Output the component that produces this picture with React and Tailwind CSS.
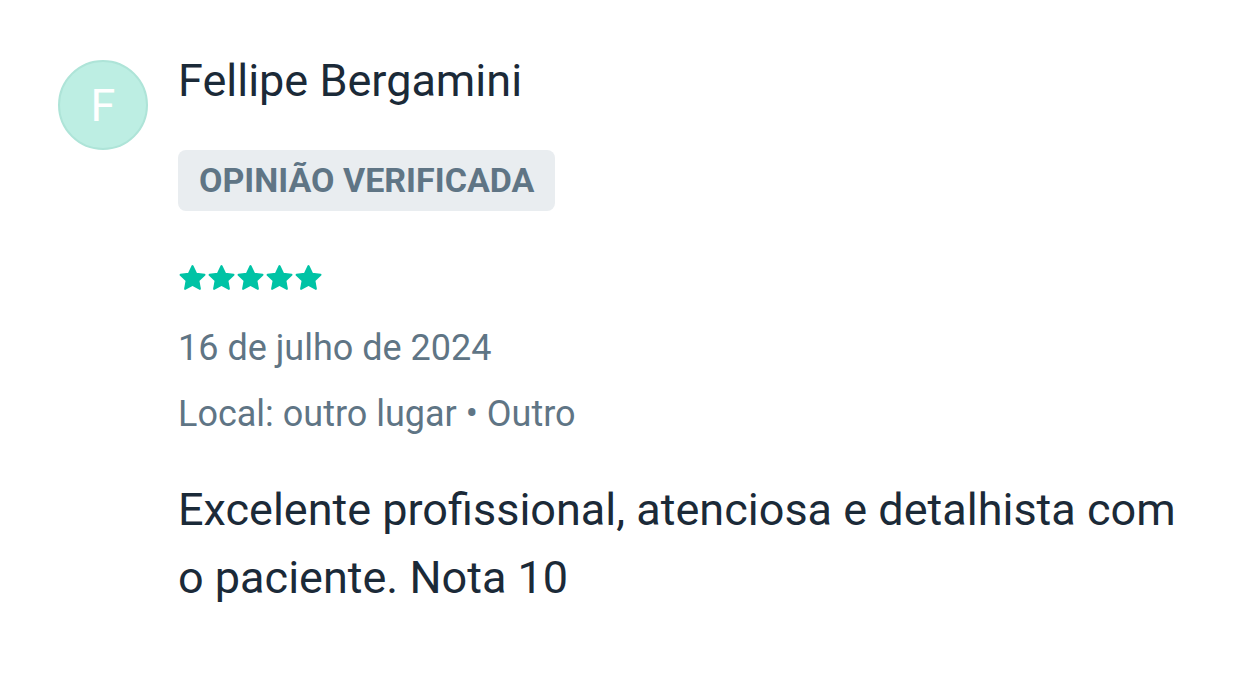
import React from "react";

function Star() {
  return (
    <svg width="29" height="28" viewBox="0 0 24 23" className="block">
      <path
        d="M12 1.6l3.05 6.3 6.9.95-5.02 4.82 1.22 6.86L12 17.28l-6.15 3.25 1.22-6.86L2.05 8.85l6.9-.95z"
        fill="#00c3a5"
        stroke="#00c3a5"
        strokeWidth="1.6"
        strokeLinejoin="round"
      />
    </svg>
  );
}

export default function App() {
  return (
    <div className="w-[1234px] h-[697px] bg-white" style={{ fontFamily: "Roboto, 'Liberation Sans', sans-serif" }}>
      <div className="flex pl-[58px] pt-[60px]">
        <div className="w-[90px] h-[90px] rounded-full bg-[#bdeee3] border-2 border-[#aee4d8] flex items-center justify-center text-white text-[45px] leading-none shrink-0">
          F
        </div>
        <div className="ml-[30px] flex flex-col">
          <div className="text-[45px] leading-[52px] text-[#1b2a38] mt-[-5px]">Fellipe Bergamini</div>
          <div className="mt-[43px] self-start bg-[#e9edf0] rounded-[8px] h-[61px] px-[21px] flex items-center text-[34px] font-bold text-[#5f7585]">
            OPINIÃO VERIFICADA
          </div>
          <div className="mt-[53px] flex">
            <Star />
            <Star />
            <Star />
            <Star />
            <Star />
          </div>
          <div className="mt-[34px] text-[36px] leading-[44px] text-[#5f7585]">16 de julho de 2024</div>
          <div className="mt-[22px] text-[36px] leading-[44px] text-[#5f7585]">Local: outro lugar • Outro</div>
          <div className="mt-[40px] text-[45px] leading-[67.5px] text-[#1b2a38] w-[1010px]">
            Excelente profissional, atenciosa e detalhista com o paciente. Nota 10
          </div>
        </div>
      </div>
    </div>
  );
}
